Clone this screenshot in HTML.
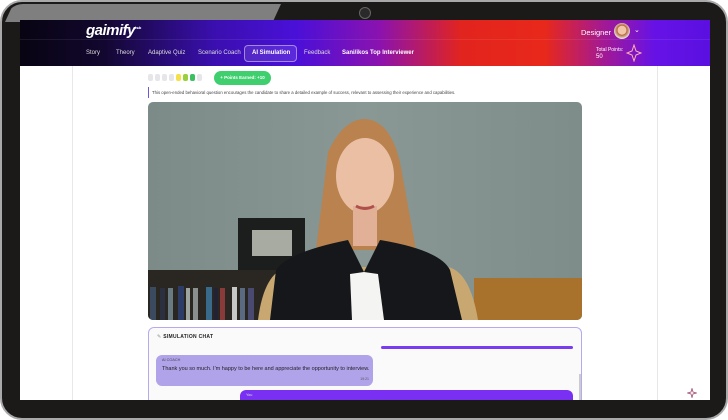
<!DOCTYPE html>
<html><head><meta charset="utf-8"><style>
*{margin:0;padding:0;box-sizing:border-box}
body{width:728px;height:400px;overflow:hidden;background:#fff;font-family:"Liberation Sans",sans-serif;position:relative}
.frame{position:absolute;left:0;top:0;width:728px;height:420px;border-radius:22px;background:#1c1a19;border:2px solid #a9a9a9}
.cam{position:absolute;left:357px;top:5px;width:12px;height:12px;border-radius:50%;border:1.5px solid #666;background:#2a2a2a}
.shine{position:absolute;left:3px;top:2px;width:276px;height:18px;background:#8b8b8b;clip-path:polygon(0 100%,3% 0,100% 0,97% 100%);opacity:.9;border-top-left-radius:20px}
.screen{position:absolute;left:20px;top:20px;width:690px;height:380px;background:#fff;overflow:hidden}
.hdr{position:absolute;left:0;top:0;width:690px;height:46px;background:linear-gradient(90deg,#080412 0%,#12072e 12%,#3a0fae 28%,#4a10d8 40%,#8a12b0 52%,#e2241e 64%,#e8281a 76%,#a81a8c 84%,#6612e6 92%,#5a10e0 100%)}
.hdr .line{position:absolute;left:0;top:19px;width:690px;height:1px;background:rgba(255,255,255,.08)}
.logo{position:absolute;left:66px;top:2px;color:#fff;font-style:italic;font-weight:bold;font-size:15px;letter-spacing:-.5px}
.logo sup{font-size:4px;font-style:normal}
.nav{position:absolute;top:30px;font-size:6px;color:#ddd}
.act{position:absolute;left:224px;top:25px;width:53px;height:17px;border:1px solid rgba(255,255,255,.45);border-radius:4px;background:rgba(255,255,255,.1)}
.side{position:absolute;top:46px;width:1px;height:340px;background:#e8e8e8}
.vid{position:absolute;left:128px;top:82px;width:434px;height:218px;border-radius:5px;overflow:hidden}
.chat{position:absolute;left:128px;top:307px;width:434px;height:80px;border:1px solid #b9a8f0;border-radius:6px;background:#fafafb}
</style></head><body>
<div class="frame"><div class="shine"></div><div class="cam"></div></div>
<div class="screen">
 <div class="hdr"><div class="line"></div>
  <div class="logo">gaimify<sup>hub</sup></div>
  <div class="nav" style="left:66px">Story</div>
  <div class="nav" style="left:96px">Theory</div>
  <div class="nav" style="left:128px">Adaptive Quiz</div>
  <div class="nav" style="left:178px">Scenario Coach</div>
  <div class="act"></div>
  <div class="nav" style="left:232px;color:#fff;font-weight:bold">AI Simulation</div>
  <div class="nav" style="left:284px">Feedback</div>
  <div class="nav" style="left:322px;color:#fff;font-weight:bold">Sani/ikos Top Interviewer</div>
  <div style="position:absolute;left:561px;top:8px;font-size:7.5px;color:#fff">Designer</div>
  <div style="position:absolute;left:594px;top:3px;width:16px;height:16px;border-radius:50%;background:radial-gradient(circle at 50% 45%,#f2c6a8 0 35%,#b4663a 40%,#e8e0da 70%)"></div>
  <div style="position:absolute;left:614px;top:6px;font-size:7px;color:#fff">&#8964;</div>
  <div style="position:absolute;left:576px;top:27px;font-size:5px;color:#fff;line-height:7px">Total Points:<br><span style="font-size:6px">50</span></div>
  <svg style="position:absolute;left:606px;top:24px" width="16" height="18" viewBox="0 0 16 18"><path d="M8 1 L10 7 L15 9 L10 11 L8 17 L6 11 L1 9 L6 7 Z" fill="none" stroke="#ffb0b0" stroke-width="1"/></svg>
 </div>
 <div class="side" style="left:52px"></div><div class="side" style="left:637px"></div>
 <div style="position:absolute;left:128px;top:54px;display:flex;gap:2px">
  <i style="width:5px;height:7px;background:#e6e6ea;border-radius:2px"></i><i style="width:5px;height:7px;background:#e6e6ea;border-radius:2px"></i><i style="width:5px;height:7px;background:#e6e6ea;border-radius:2px"></i><i style="width:5px;height:7px;background:#e6e6ea;border-radius:2px"></i><i style="width:5px;height:7px;background:#f5e04a;border-radius:2px"></i><i style="width:5px;height:7px;background:#9ad03c;border-radius:2px"></i><i style="width:5px;height:7px;background:#3cc060;border-radius:2px"></i><i style="width:5px;height:7px;background:#e6e6ea;border-radius:2px"></i>
 </div>
 <div style="position:absolute;left:194px;top:51px;width:57px;height:14px;border-radius:7px;background:#3fcf6e;color:#fff;font-size:4.5px;font-weight:bold;line-height:14px;text-align:center">+ Points Earned: +10</div>
 <div style="position:absolute;left:128px;top:67px;height:11px;border-left:1px solid #6a5ad8;padding-left:3px;font-size:4.3px;color:#444;line-height:11px;white-space:nowrap">This open-ended behavioral question encourages the candidate to share a detailed example of success, relevant to assessing their experience and capabilities.</div>
 <div class="vid">
  <svg width="434" height="218" viewBox="0 0 434 218">
   <defs><linearGradient id="w" x1="0" x2="1"><stop offset="0" stop-color="#7c8a88"/><stop offset=".5" stop-color="#8a9895"/><stop offset="1" stop-color="#7e8c8a"/></linearGradient></defs>
   <rect width="434" height="218" fill="url(#w)"/>
   <rect x="0" y="168" width="130" height="50" fill="#2a2622"/>
   <g><rect x="2" y="185" width="6" height="33" fill="#3b4a5e"/><rect x="12" y="186" width="5" height="32" fill="#2a3040"/><rect x="20" y="186" width="5" height="32" fill="#6a7a82"/><rect x="30" y="184" width="6" height="34" fill="#2c3c66"/><rect x="38" y="186" width="4" height="32" fill="#a0a4a0"/><rect x="45" y="186" width="5" height="32" fill="#8a8f90"/><rect x="58" y="185" width="6" height="33" fill="#3a6a8a"/><rect x="66" y="186" width="4" height="32" fill="#223"/><rect x="72" y="186" width="5" height="32" fill="#8a3a3a"/><rect x="84" y="185" width="5" height="33" fill="#c8c8c8"/><rect x="92" y="186" width="5" height="32" fill="#5a6a80"/><rect x="100" y="186" width="6" height="32" fill="#4a4a70"/></g>
   <rect x="90" y="116" width="67" height="52" fill="#1c1e1e"/><rect x="104" y="128" width="40" height="26" fill="#a7aba2"/>
   <rect x="326" y="176" width="108" height="42" fill="#a8722c"/>
   <path d="M110 218 Q116 170 140 165 L300 165 Q322 170 330 218Z" fill="#c8a870"/>
   <path d="M180 50 Q196 16 218 17 Q242 19 252 60 L268 148 L168 148 Z" fill="#b9824e"/>
   <ellipse cx="217" cy="74" rx="29" ry="38" fill="#ebbfa4"/>
   <rect x="205" y="104" width="24" height="40" fill="#e2b096"/>
   <path d="M122 218 L128 168 Q140 150 200 138 L216 170 L232 138 Q292 148 302 168 L314 218Z" fill="#15171a"/>
   <path d="M202 172 L216 170 L230 172 L236 218 L204 218Z" fill="#f4f4f2"/>
   <path d="M208 104 Q217 109 226 104" stroke="#b0504a" stroke-width="3" fill="none"/>
  </svg>
 </div>
 <div class="chat">
  <div style="position:absolute;left:8px;top:6px;font-size:5px;font-weight:bold;color:#222;letter-spacing:.3px"><span style="color:#bbb">✎</span> SIMULATION CHAT</div>
  <div style="position:absolute;left:232px;top:18px;width:192px;height:3px;border-radius:2px;background:#7a3cf0"></div>
  <div style="position:absolute;left:7px;top:27px;width:217px;height:31px;border-radius:6px;background:#b0a3ea">
   <div style="position:absolute;left:6px;top:3px;font-size:3.8px;color:#444">AI COACH</div>
   <div style="position:absolute;left:6px;top:11px;font-size:5.5px;color:#222;white-space:nowrap">Thank you so much. I'm happy to be here and appreciate the opportunity to interview.</div>
   <div style="position:absolute;right:4px;top:22px;font-size:3.5px;color:#555">19:21</div>
  </div>
  <div style="position:absolute;left:91px;top:62px;width:333px;height:20px;border-radius:6px;background:#7a30f2"><div style="position:absolute;left:6px;top:3px;font-size:3.8px;color:#ddd">You</div></div>
  <div style="position:absolute;left:430px;top:46px;width:2px;height:34px;background:#ccc"></div>
 </div>
 <svg style="position:absolute;left:667px;top:368px" width="10" height="10" viewBox="0 0 10 10"><path d="M5 0.5 L6 4 L9.5 5 L6 6 L5 9.5 L4 6 L0.5 5 L4 4 Z" fill="none" stroke="#a04a70" stroke-width=".8"/></svg>
</div>
</body></html>
